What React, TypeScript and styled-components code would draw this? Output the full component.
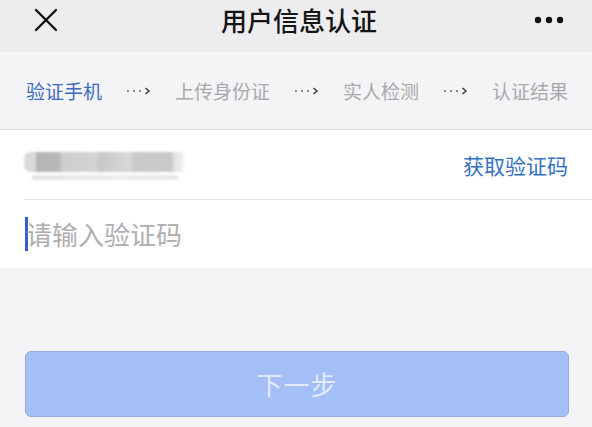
import { Fragment } from 'react'
import styled, { createGlobalStyle } from 'styled-components'

const GlobalStyle = createGlobalStyle`
    html, body {
        margin: 0;
        padding: 0;
        background: #f4f3f6;
        font-family: "Noto Sans", "Noto Sans CJK SC", sans-serif;
    }
`

const steps = ['验证手机', '上传身份证', '实人检测', '认证结果']

const Page = styled.div`
    width: 592px;
    height: 427px;
    display: flex;
    flex-direction: column;
    background: #f4f3f6;
    overflow: hidden;
`

const Header = styled.header`
    height: 52px;
    background: #ededf0;
    display: grid;
    grid-template-columns: 80px 1fr 80px;
    align-items: start;
    padding: 0 28px 0 34px;
    box-sizing: border-box;
`

const HeaderCell = styled.div<{ $align: string }>`
    height: 40px;
    display: flex;
    align-items: center;
    justify-content: ${p => p.$align};
`

const Title = styled.h1`
    margin: 0;
    font-size: 26px;
    font-weight: 500;
    color: #151515;
`

const Steps = styled.nav`
    height: 77px;
    display: flex;
    align-items: center;
    gap: 24px;
    padding-left: 26px;
    border-bottom: 1px solid #e3e2e6;
`

const Step = styled.span<{ $active?: boolean }>`
    font-size: 19px;
    color: ${p => (p.$active ? '#3a6dbf' : '#a9a9ad')};
    white-space: nowrap;
`

const Form = styled.section`
    background: #fff;
    padding-left: 24px;
`

const Row = styled.div<{ $last?: boolean }>`
    height: ${p => (p.$last ? '68px' : '69px')};
    display: flex;
    align-items: center;
    justify-content: space-between;
    padding-right: 24px;
    border-bottom: ${p => (p.$last ? 'none' : '1px solid #e4e4e6')};
`

const BlurredPhone = styled.div`
    width: 160px;
    height: 28px;
    margin-top: 2px;
    display: flex;
    flex-direction: column;
    gap: 3px;
    filter: blur(1.2px);
`

const BlurTop = styled.div`
    height: 20px;
    border-radius: 7px 2px 2px 7px;
    background: linear-gradient(90deg, #dadadc 0%, #dadadc 7%, #b4b4b6 8%, #b9b9bb 22%, #cdcdcf 24%, #d4d4d6 45%, #c7c7c9 47%, #d8d8da 66%, #cbcbcd 68%, #c9c9cb 92%, #e2e2e4 94%, #f4f4f6 100%);
`

const BlurBottom = styled.div`
    height: 5px;
    width: 146px;
    margin-left: 8px;
    background: linear-gradient(90deg, #e4e4e6, #ececee 60%, #e6e6e8);
`

const CodeLink = styled.span`
    font-size: 21px;
    color: #3370c2;
    white-space: nowrap;
`

const InputWrap = styled.div`
    display: flex;
    align-items: center;
`

const Caret = styled.span`
    width: 3px;
    height: 34px;
    background: #3a5fcc;
    margin-left: 1px;
`

const Placeholder = styled.span`
    font-size: 26px;
    color: #aeaeb2;
    margin-left: -2px;
`

const Footer = styled.div`
    flex: 1;
    display: flex;
    align-items: flex-end;
    padding: 0 23px 10px 25px;
`

const NextButton = styled.button`
    width: 100%;
    height: 66px;
    border: 1px solid #94acdd;
    border-radius: 6px;
    background: #a4bff5;
    color: #e3ebfb;
    font-family: inherit;
    font-size: 26px;
    letter-spacing: 1px;
`

function CloseIcon() {
    return (
        <svg width="24" height="24" viewBox="0 0 24 24">
            <path d="M2 2L22 22M22 2L2 22" stroke="#111" strokeWidth="2.4" strokeLinecap="round" />
        </svg>
    )
}

function MoreIcon() {
    return (
        <svg width="30" height="8" viewBox="0 0 30 8">
            <circle cx="4" cy="4" r="3.2" fill="#111" />
            <circle cx="15" cy="4" r="3.2" fill="#111" />
            <circle cx="26" cy="4" r="3.2" fill="#111" />
        </svg>
    )
}

function StepArrow() {
    return (
        <svg width="25" height="10" viewBox="0 0 25 10">
            <circle cx="2" cy="5" r="1" fill="#666" />
            <circle cx="8" cy="5" r="1" fill="#666" />
            <circle cx="14" cy="5" r="1" fill="#666" />
            <path d="M19.5 2L23 5L19.5 8" stroke="#444" strokeWidth="1.6" fill="none" />
        </svg>
    )
}

export default function App() {
    return (
        <Page>
            <GlobalStyle />
            <Header>
                <HeaderCell $align="flex-start"><CloseIcon /></HeaderCell>
                <HeaderCell $align="center"><Title>用户信息认证</Title></HeaderCell>
                <HeaderCell $align="flex-end"><MoreIcon /></HeaderCell>
            </Header>
            <Steps>
                {steps.map((s, i) => (
                    <Fragment key={s}>
                        {i > 0 && <StepArrow />}
                        <Step $active={i === 0}>{s}</Step>
                    </Fragment>
                ))}
            </Steps>
            <Form>
                <Row>
                    <BlurredPhone>
                        <BlurTop />
                        <BlurBottom />
                    </BlurredPhone>
                    <CodeLink>获取验证码</CodeLink>
                </Row>
                <Row $last>
                    <InputWrap>
                        <Caret />
                        <Placeholder>请输入验证码</Placeholder>
                    </InputWrap>
                </Row>
            </Form>
            <Footer>
                <NextButton>下一步</NextButton>
            </Footer>
        </Page>
    )
}
